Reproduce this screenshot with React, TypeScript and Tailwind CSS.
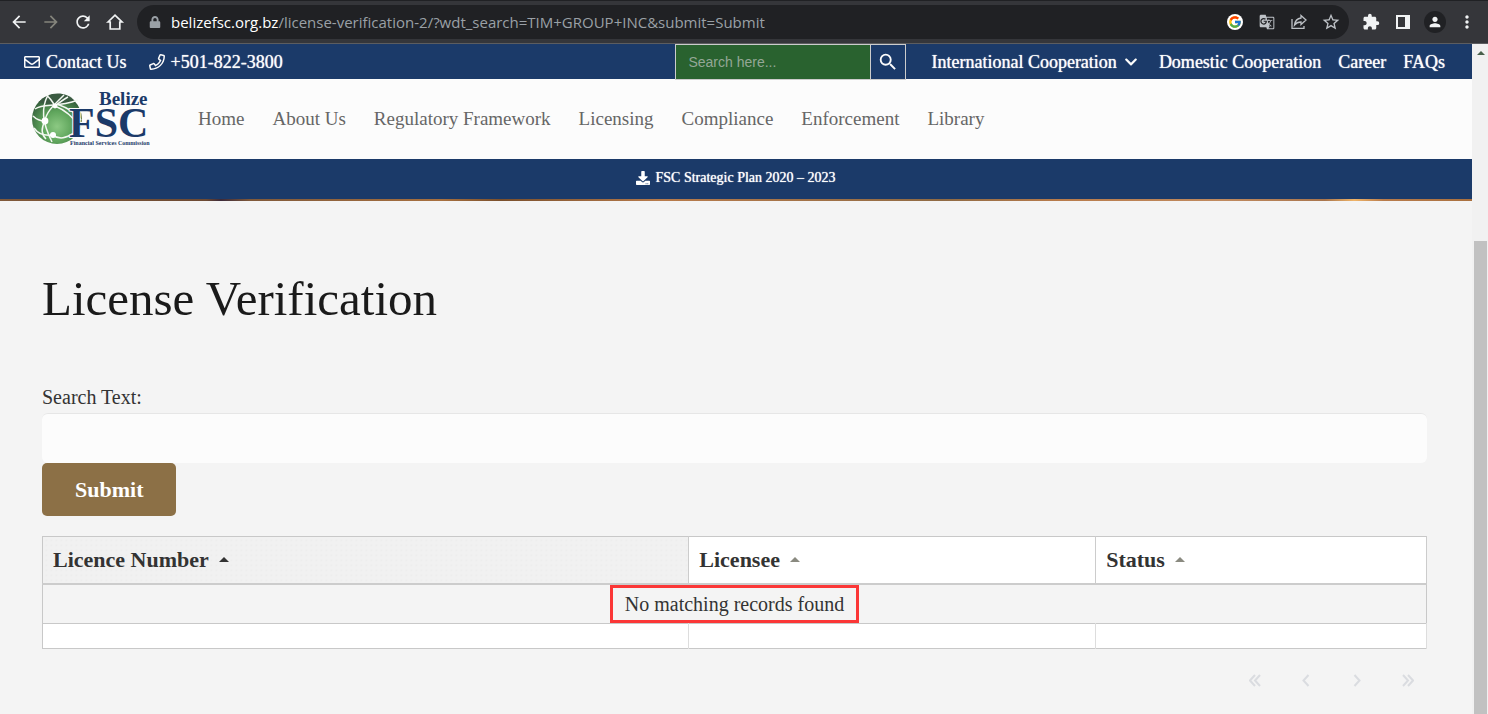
import { useState } from "react";
import { FaChevronDown, FaDownload, FaLock, FaRegEnvelope } from "react-icons/fa";
import { FcGoogle } from "react-icons/fc";
import {
  MdArrowBack,
  MdArrowForward,
  MdExtension,
  MdGTranslate,
  MdMoreVert,
  MdPerson,
  MdRefresh,
  MdSearch,
  MdStarBorder,
} from "react-icons/md";

const navLinks = [
  "Home",
  "About Us",
  "Regulatory Framework",
  "Licensing",
  "Compliance",
  "Enforcement",
  "Library",
];

const columns = [
  { name: "Licence Number", width: "w-[46.7%]", sorted: true },
  { name: "Licensee", width: "w-[29.4%]", sorted: false },
  { name: "Status", width: "w-[23.9%]", sorted: false },
];

const pages = [
  { label: "First page", path: "M6 1 1 6.500 6 12M11 1 6 6.500 11 12" },
  { label: "Previous page", path: "M8.500 1 3.500 6.500 8.500 12" },
  { label: "Next page", path: "M3.500 1 8.500 6.500 3.500 12" },
  { label: "Last page", path: "M1 1 6 6.500 1 12M6 1 11 6.500 6 12" },
];

function BrowserBar() {
  return (
    <header className="flex h-11 shrink-0 items-center border-t border-b border-t-[#202124] border-b-[#5c5d60] bg-[#35363a] pr-[11px] pl-[9px] text-[#f1f3f4]">
      <div className="flex items-center gap-3">
        <button aria-label="Back">
          <MdArrowBack className="size-5" />
        </button>
        <button aria-label="Forward" className="text-[#85857c]">
          <MdArrowForward className="size-5" />
        </button>
        <button aria-label="Reload">
          <MdRefresh className="size-5" />
        </button>
        <button aria-label="Home page">
          <svg
            viewBox="0 0 20 20"
            fill="none"
            stroke="currentColor"
            strokeWidth="1.700"
            className="size-5"
          >
            <path d="M3 10 10 3.200 17 10h-2.200v7H5.200v-7Z" />
          </svg>
        </button>
      </div>

      <div className="ml-3 flex h-[34px] flex-1 items-center rounded-full bg-[#202124] pr-2 pl-3 text-[#9aa0a6]">
        <FaLock className="size-3" />
        <p className="ml-2.5 flex-1 font-['Open_Sans',sans-serif] text-[15px] whitespace-nowrap">
          <span className="text-white">belizefsc.org.bz</span>
          /license-verification-2/?wdt_search=TIM+GROUP+INC&amp;submit=Submit
        </p>
        <div className="flex items-center gap-3 text-[#bdc1c6]">
          <button
            aria-label="Google search"
            className="mx-0.5 rounded-full bg-white p-px"
          >
            <FcGoogle className="size-3.5" />
          </button>
          <button aria-label="Translate" className="mx-0.5">
            <MdGTranslate className="size-4" />
          </button>
          <button aria-label="Share" className="mx-0.5">
            <svg
              viewBox="0 0 16 16"
              fill="none"
              stroke="currentColor"
              strokeWidth="1.300"
              className="size-4"
            >
              <path d="M1 5v9.300h12V12" />
              <path d="M10 1.500 15 6l-5 4.500V8C7 8 5 9 3.500 11 4 7 6.500 4.500 10 4Z" />
            </svg>
          </button>
          <button aria-label="Bookmark">
            <MdStarBorder className="size-5" />
          </button>
        </div>
      </div>

      <div className="ml-3 flex items-center gap-3">
        <button aria-label="Extensions">
          <MdExtension className="size-5 p-px" />
        </button>
        <button aria-label="Side panel" className="mx-[3px]">
          <svg viewBox="0 0 14 14" className="size-3.5">
            <path
              fill="currentColor"
              fillRule="evenodd"
              d="M0 0h14v14H0ZM2 2v10h7V2Z"
            />
          </svg>
        </button>
        <button
          aria-label="Profile"
          className="-mx-px rounded-full bg-[#202124] p-[3px]"
        >
          <MdPerson className="size-4" />
        </button>
        <button aria-label="Menu">
          <MdMoreVert className="size-5" />
        </button>
      </div>
    </header>
  );
}

function PhoneIcon() {
  return (
    <svg viewBox="0 0 512 512" fill="currentColor" className="size-4">
      <path d="M476.500 22.900L382.300 1.200c-21.600-5-43.600 6.200-52.300 26.600l-43.500 101.500c-8 18.600-2.600 40.600 13.100 53.400l40 32.700C311 267.800 267.800 311 215.400 339.500l-32.700-40c-12.800-15.700-34.800-21.100-53.400-13.100L27.700 329.900c-20.400 8.700-31.500 30.700-26.600 52.300l21.700 94.200c4.800 20.900 23.200 35.500 44.600 35.500C312.300 512 512 313.700 512 67.500c0-21.400-14.600-39.800-35.500-44.600zM69.300 464l-20.900-90.700 98.200-42.100 55.700 68.100c98.800-46.400 150.600-98 197-197l-68.100-55.700 42.100-98.200L464 69.300C463 286.900 286.900 463 69.300 464z" />
    </svg>
  );
}

function Logo() {
  return (
    <svg
      viewBox="0 0 118 54"
      role="img"
      aria-label="Belize FSC"
      className="h-[54px] w-[118px] overflow-visible"
    >
      <defs>
        <radialGradient id="globe" cx="50%" cy="65%" r="60%">
          <stop offset="0" stopColor="#8cc983" />
          <stop offset="0.5" stopColor="#5fa55c" />
          <stop offset="1" stopColor="#35603c" />
        </radialGradient>
      </defs>
      <circle cx="25" cy="27" r="25" fill="url(#globe)" />
      <path d="M7 10C15 0 33-2 43 9 34 13 17 15 7 10Z" fill="#3a5a41" />
      <g fill="none" stroke="#f4f8f2" strokeWidth="1.500">
        <path d="M3 17C12 11 24 16 46 8" />
        <path d="M16 3C9 16 10 30 20 50" />
        <path d="M32 3C22 13 14 20 13 29 8 29 4 27 1 24" />
        <path d="M23 14C33 18 41 25 47 34" />
        <path d="M25 12C36 16 44 21 49 28" />
        <path d="M13 29C8 38 10 43 14 47" />
        <path d="M20 43C28 48 34 46 42 41M2 36C7 43 13 44 20 43" />
        <path d="M23 14C20 9 17 5 15 4M23 14C28 10 32 7 36 5" />
      </g>
      <g fill="#fff">
        <circle cx="13" cy="29" r="3.400" />
        <circle cx="21" cy="43" r="3" />
        <circle cx="23" cy="14" r="2.400" />
      </g>
      <g
        fill="#1b3a69"
        fontWeight="bold"
        fontFamily="'Liberation Serif', serif"
      >
        <text x="67" y="13" fontSize="19">
          Belize
        </text>
        <text
          x="37"
          y="45"
          fontSize="42"
          stroke="#fcfcfc"
          strokeWidth="2"
          paintOrder="stroke"
        >
          FSC
        </text>
        <text x="38" y="53" fontSize="6">
          Financial Services Commission
        </text>
      </g>
    </svg>
  );
}

function TopBar() {
  return (
    <div className="flex h-[35px] items-center justify-between bg-[#1b3a69] pr-[27px] pl-6 text-lg whitespace-nowrap text-[#fcfcfc] [text-shadow:0_0_1px_currentColor]">
      <div className="flex items-center gap-[22px]">
        <a href="#contact" className="flex items-center gap-1.5">
          <FaRegEnvelope className="size-4" />
          Contact Us
        </a>
        <a href="tel:+5018223800" className="flex items-center gap-1.5">
          <PhoneIcon />
          +501-822-3800
        </a>
      </div>

      <div className="flex items-center gap-[25px]">
        <form className="flex h-9 border border-[#cccccc]">
          <input
            type="search"
            aria-label="Search the site"
            placeholder="Search here..."
            className="w-[194px] bg-[#29622f] px-3 font-['Liberation_Sans',sans-serif] text-sm outline-none placeholder:text-[#94a796]"
          />
          <button
            aria-label="Search"
            className="flex w-[35px] items-center justify-center border-l border-[#cccccc]"
          >
            <MdSearch className="size-[22px]" />
          </button>
        </form>
        <nav className="flex items-center gap-[17px]">
          <a href="#international" className="mr-1 flex items-center gap-[7px]">
            International Cooperation
            <FaChevronDown className="size-3.5" />
          </a>
          <a href="#domestic">Domestic Cooperation</a>
          <a href="#career">Career</a>
          <a href="#faqs">FAQs</a>
        </nav>
      </div>
    </div>
  );
}

function MainNav() {
  return (
    <div className="flex h-20 items-center bg-[#fcfcfc] pl-8">
      <a href="#home">
        <Logo />
      </a>
      <nav className="ml-12 flex gap-7 text-[19px] whitespace-nowrap text-[#666666]">
        {navLinks.map((link) => (
          <a key={link} href="#nav">
            {link}
          </a>
        ))}
      </nav>
    </div>
  );
}

function SortArrow({ active }: { active: boolean }) {
  return (
    <svg
      viewBox="0 0 10 5"
      className={`h-[5px] w-2.5 ${active ? "fill-[#333333]" : "fill-[#8a8a80]"}`}
    >
      <path d="M5 0 10 5H0Z" />
    </svg>
  );
}

function ResultsTable() {
  return (
    <table className="mt-5 w-full table-fixed border-collapse border border-[#c8c8c8] bg-white text-[#333333]">
      <thead>
        <tr className="h-[47px] border-b-2 border-[#cccccc]">
          {columns.map(({ name, width, sorted }) => (
            <th
              key={name}
              className={`${width} border-r border-[#cccccc] px-2.5 py-0 text-left text-[22px] leading-7 font-bold ${
                sorted
                  ? "bg-[#f1f1f1] bg-[radial-gradient(#ececec_1px,transparent_1px)] bg-size-[5px_5px]"
                  : ""
              }`}
            >
              <button className="flex items-center gap-2.5">
                {name}
                <SortArrow active={sorted} />
              </button>
            </th>
          ))}
        </tr>
      </thead>
      <tbody>
        <tr className="border-b border-[#c8c8c8] bg-[#f4f4f4]">
          <td colSpan={3} className="p-0 text-center text-xl">
            <span className="inline-block h-[38px] border-3 border-[#fb3737] px-3 align-top leading-8">
              No matching records found
            </span>
          </td>
        </tr>
      </tbody>
      <tfoot>
        <tr className="h-[25px]">
          {columns.map(({ name }) => (
            <td key={name} className="border-r border-[#dddddd]" />
          ))}
        </tr>
      </tfoot>
    </table>
  );
}

function Pagination() {
  return (
    <nav
      aria-label="Pagination"
      className="mt-[25px] mr-[13px] flex justify-end gap-[39px] text-[#dadce0]"
    >
      {pages.map(({ label, path }) => (
        <button key={label} aria-label={label}>
          <svg
            viewBox="0 0 12 13"
            fill="none"
            stroke="currentColor"
            strokeWidth="2"
            className="h-[13px] w-3"
          >
            <path d={path} />
          </svg>
        </button>
      ))}
    </nav>
  );
}

export default function App() {
  const [search, setSearch] = useState("");

  return (
    <div className="flex h-screen flex-col overflow-hidden">
      <BrowserBar />

      <div className="flex min-h-0 flex-1 bg-[#f4f4f4] font-['Georgia','Liberation_Serif',serif]">
        {/* Page */}
        <div className="min-w-0 flex-1 overflow-hidden">
          <TopBar />
          <MainNav />
          <div className="flex h-10 items-center justify-center bg-[#1b3a69] pb-0.5 text-sm text-white [text-shadow:0_0_1px_currentColor]">
            <a href="#plan" className="flex items-center gap-[5px]">
              <FaDownload className="size-3.5" />
              FSC Strategic Plan 2020 – 2023
            </a>
          </div>
          {/* Bottom edge of the banner photo */}
          <div className="h-0.5 bg-[linear-gradient(90deg,#80593a,#6d4a33_14%,#3c2a3a_15%,#80593a_17%,#a8703f_30%,#7a4f2c_34%,#b87b4b_45%,#8f6a44_64%,#b87b4b_72%,#c08a5f_83%,#a9754d_90%,#f0b468_92%,#b87b4b_94%,#a9703f)]" />

          <main className="pr-[45px] pl-[42px]">
            <h1 className="pt-[70px] text-[49px] leading-[56px] text-[#1a1a1a]">
              License Verification
            </h1>

            <form onSubmit={(event) => event.preventDefault()}>
              <label
                htmlFor="search-text"
                className="mt-14 block pb-0.5 text-xl leading-7 text-[#333333]"
              >
                Search Text:
              </label>
              <input
                id="search-text"
                value={search}
                onChange={(event) => setSearch(event.target.value)}
                className="block h-[50px] w-full rounded-md border-t border-[#e6e6e6] bg-[#fcfcfc] px-4 text-xl outline-none"
              />
              <button className="h-[53px] rounded-[5px] bg-[#8c7046] px-[33px] text-[22px] font-bold text-white">
                Submit
              </button>
            </form>

            <ResultsTable />
            <Pagination />
          </main>
        </div>

        {/* Scrollbar */}
        <div className="flex w-4 flex-col bg-[#f1f1f1] pl-0.5">
          <svg viewBox="0 0 14 20" className="h-5 w-3.5 fill-[#48604b]">
            <path d="M7 7 11 11H3Z" />
          </svg>
          <div className="mt-[177px] mr-px flex-1 bg-[#c1c1c1]" />
        </div>
      </div>
    </div>
  );
}
